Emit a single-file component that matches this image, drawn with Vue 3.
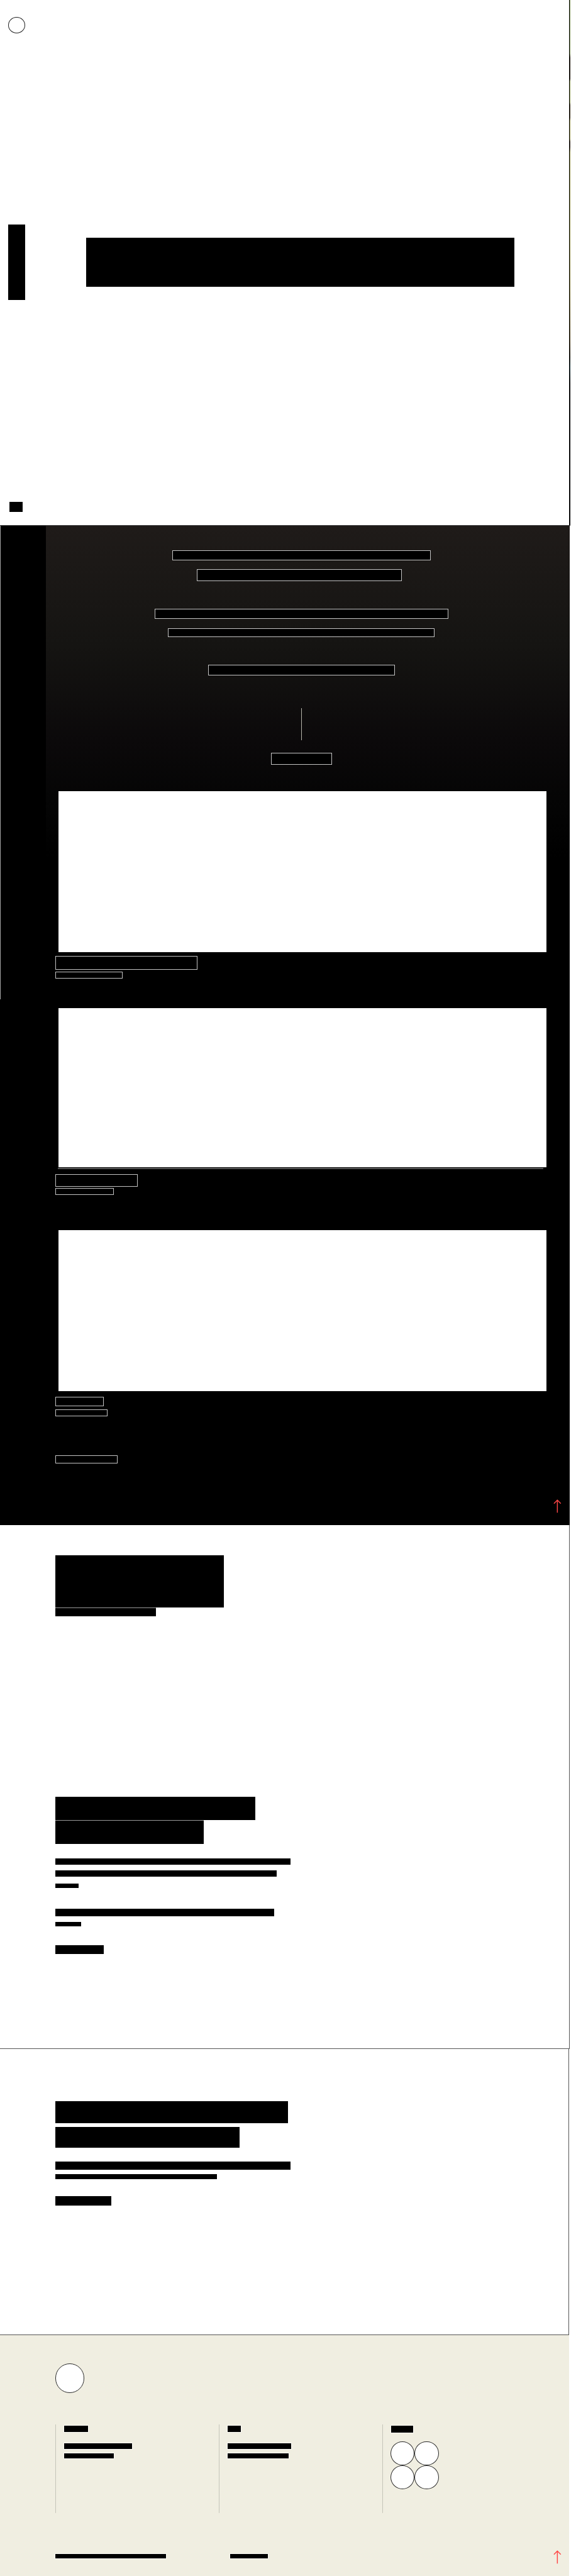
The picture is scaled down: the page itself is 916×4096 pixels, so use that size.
<script setup>
const S = 916 / 1440
const px = (n) => `${(n * S).toFixed(3)}px`

// Turns [left, top, right, bottom] boxes, listed downwards, into flow items with margins.
function stack(top, left, boxes) {
  let y = top
  return boxes.map(([x0, y0, x1, y1, kind = '']) => {
    const style = {
      marginTop: px(y0 - y),
      marginLeft: px(x0 - left),
      width: px(x1 - x0),
      height: px(y1 - y0),
    }
    y = y1
    return { kind, style }
  })
}

const rail = stack(0, 0, [
  [20, 43, 62.5, 83.3, 'ring'],
  [21, 562, 63.5, 750],
  [24, 1254, 57, 1280],
])
const hero = stack(0, 114, [[215, 594.3, 1285.7, 716.4]])

const work = stack(1315, 114, [
  [430, 1376, 1076.5, 1400, 'outline'],
  [492, 1423, 1004.5, 1452, 'outline'],
  [387.5, 1522, 1121.5, 1547, 'outline'],
  [419, 1570, 1086.5, 1593, 'outline'],
  [521, 1661, 987.5, 1688, 'outline'],
  [753, 1770, 754.5, 1850, 'thread'],
  [677, 1882, 830, 1912, 'outline'],
  [146, 1978.2, 1365.6, 2380.2, 'picture'],
  [138, 2390, 493, 2424, 'outline'],
  [138, 2429.3, 306, 2446, 'outline'],
  [146, 2520, 1365.6, 2918.3, 'picture'],
  [145, 2918.9, 1358.3, 2922, 'edge'],
  [138, 2935, 344.5, 2966, 'outline'],
  [138, 2970, 284, 2987, 'outline'],
  [146, 3076, 1365.6, 3477.3, 'picture'],
  [138, 3492, 260, 3515, 'outline'],
  [138, 3524, 269.5, 3540, 'outline'],
  [138, 3638, 294.5, 3659, 'outline'],
])

const about = stack(3812, 0, [
  [138.7, 3887, 559, 4018.3],
  [138.7, 4018.3, 390.5, 4040, 'seam'],
  [138.7, 4492, 638.8, 4549],
  [138.7, 4549, 509.2, 4609, 'seam'],
  [138.7, 4645, 727, 4661],
  [138.7, 4675, 691.8, 4691],
  [138.7, 4708, 196, 4720],
  [138.7, 4771, 686.2, 4790],
  [138.7, 4805, 203, 4816],
  [138.7, 4862, 259.2, 4884],
])

const contact = stack(5122, 0, [
  [138.7, 5252, 720, 5307],
  [138.7, 5316, 599, 5369],
  [138.7, 5404, 727, 5423],
  [138.7, 5434, 541.8, 5448],
  [138.7, 5490, 279, 5514],
])

const columns = [
  stack(6061, 139, [
    [160, 6063, 220.4, 6079.2, 'halo'],
    [160, 6108, 329.7, 6122, 'halo'],
    [160, 6133, 285.6, 6145, 'halo'],
  ]),
  stack(6061, 548, [
    [569.4, 6064, 603.4, 6080, 'halo'],
    [569.4, 6108, 728.3, 6122, 'halo'],
    [569.4, 6133, 721.8, 6146, 'halo'],
  ]),
  stack(6061, 956, [[977, 6064, 1032.2, 6081.2, 'halo']]),
]
</script>

<template>
  <div class="page">
    <section class="hero">
      <aside class="rail">
        <div v-for="(b, i) in rail" :key="i" class="bar" :class="b.kind" :style="b.style"></div>
      </aside>
      <main class="hero-main">
        <div v-for="(b, i) in hero" :key="i" class="bar" :style="b.style"></div>
      </main>
      <div class="photo"></div>
    </section>

    <section class="work">
      <div class="work-rail"><i></i></div>
      <div class="work-main">
        <div v-for="(b, i) in work" :key="i" class="bar" :class="b.kind" :style="b.style"></div>
      </div>
      <svg class="arrow" viewBox="0 0 20 34"><path d="M10 33.3V1.8M1.5 10.5L10 2L18.5 10.5" /></svg>
    </section>

    <section class="about">
      <div v-for="(b, i) in about" :key="i" class="bar" :class="b.kind" :style="b.style"></div>
    </section>

    <section class="contact">
      <div v-for="(b, i) in contact" :key="i" class="bar" :style="b.style"></div>
    </section>

    <footer class="footer">
      <div class="logo"></div>
      <div class="columns">
        <div v-for="(col, c) in columns" :key="c" class="column">
          <div v-for="(b, i) in col" :key="i" class="bar" :class="b.kind" :style="b.style"></div>
          <div v-if="c === 2" class="social"><i v-for="n in 4" :key="n"></i></div>
        </div>
      </div>
      <div class="legal">
        <div class="bar halo copyright"></div>
        <div class="bar halo terms"></div>
      </div>
      <svg class="arrow" viewBox="0 0 20 34"><path d="M10 33.3V1.8M1.5 10.5L10 2L18.5 10.5" /></svg>
    </footer>
  </div>
</template>

<style>
body {
  background: #fff;
}
</style>

<style scoped>
.page {
  --u: calc(916px / 1440);
  width: 916px;
  height: 4096px;
  overflow: hidden;
  background: #fff;
}
section,
.footer {
  box-sizing: border-box;
  display: flow-root;
  position: relative;
}
.bar {
  box-sizing: border-box;
  background: #000;
}
.ring {
  background: #fff;
  border: 1px solid #222;
  border-radius: 50%;
}
.outline {
  border: 1px solid #c4c4c4;
}
.seam {
  border-top: 1px solid #999;
}
.picture {
  background: #fff;
}
.edge {
  background: #555;
}
.thread {
  background: #b8b7ac;
}
.halo {
  box-shadow: 0 0 0 1px #faf9f5;
}
.hero {
  display: grid;
  grid-template-columns: calc(114 * var(--u)) calc(1309 * var(--u)) calc(3 * var(--u));
  width: calc(1426 * var(--u));
  height: calc(1315 * var(--u));
  border-bottom: 1px solid #333;
}
.rail,
.hero-main,
.work-main {
  display: flow-root;
}
.photo {
  border-left: 1px solid #111;
  background: linear-gradient(
    #7f9458 0 10.2%, #20160a 11% 15%, #8c9a52 15.5% 19.5%, #3b2e16 20% 22.4%,
    #96944b 23% 26.5%, #3b2e22 27% 28%, #929044 29% 45%, #7c7430 55%, #4a3b17 65%, #151208 68%, #153337 70%, #000 73%
  );
}
.work {
  display: grid;
  grid-template-columns: calc(114 * var(--u)) 1fr;
  width: calc(1424 * var(--u));
  height: calc(2497 * var(--u));
  background: #000;
}
.work-rail i {
  display: block;
  width: 1px;
  height: calc(1183 * var(--u));
  background: #a6a6a6;
}
.work-main {
  background: linear-gradient(#1f1b19 0, #151412 calc(300 * var(--u)), #0b090a calc(540 * var(--u)), #050505 calc(680 * var(--u)), #000 calc(830 * var(--u)));
}
.arrow {
  position: absolute;
  width: calc(20 * var(--u));
  height: calc(34 * var(--u));
  fill: none;
  stroke: #ff4646;
  stroke-width: 2.3;
}
.work .arrow {
  right: calc(20 * var(--u));
  bottom: calc(30 * var(--u));
}
.about {
  width: calc(1425 * var(--u));
  height: calc(1310 * var(--u));
  border-right: 1px solid #555;
  border-bottom: 1px solid #555;
}
.contact {
  width: calc(1423 * var(--u));
  height: calc(715 * var(--u));
  border-right: 1px solid #555;
  border-bottom: 1px solid #555;
}
.footer {
  width: calc(1422 * var(--u));
  height: calc(602 * var(--u));
  background: #f0eee1;
}
.logo,
.social i {
  box-sizing: border-box;
  border: 1px solid #2a2a2a;
  border-radius: 50%;
  background: #fff;
}
.logo {
  width: calc(73 * var(--u));
  height: calc(73 * var(--u));
  margin: calc(71 * var(--u)) 0 0 calc(138 * var(--u));
}
.columns {
  display: grid;
  grid-template-columns: repeat(3, calc(408.7 * var(--u)));
  height: calc(221 * var(--u));
  margin: calc(80 * var(--u)) 0 0 calc(138.7 * var(--u));
}
.column {
  display: flow-root;
  background: linear-gradient(#c5c4b9, #c5c4b9) left / 1px 100% no-repeat;
}
.social {
  display: grid;
  grid-template-columns: repeat(2, calc(60.6 * var(--u)));
  grid-auto-rows: calc(60.4 * var(--u));
  margin: calc(21 * var(--u)) 0 0 calc(20 * var(--u));
}
.legal {
  display: flex;
  gap: calc(160 * var(--u));
  margin: calc(102 * var(--u)) 0 0 calc(138.7 * var(--u));
}
.copyright {
  width: calc(276.3 * var(--u));
  height: calc(12 * var(--u));
}
.terms {
  width: calc(95.4 * var(--u));
  height: calc(12 * var(--u));
}
.footer .arrow {
  right: calc(18 * var(--u));
  bottom: calc(30 * var(--u));
}
</style>
